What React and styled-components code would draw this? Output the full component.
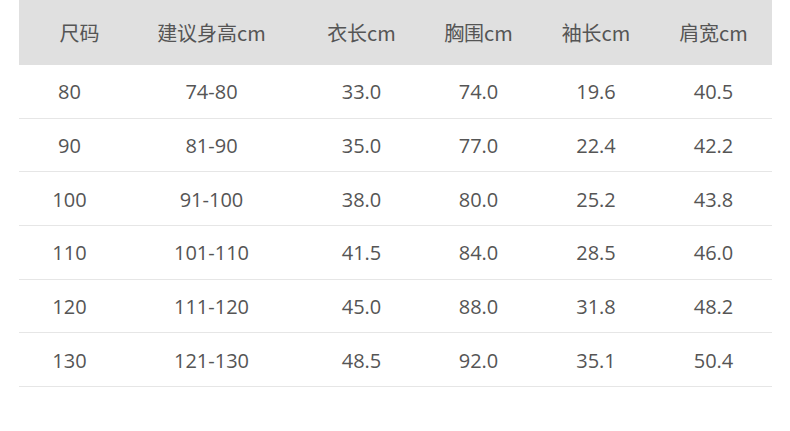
import React from "react";
import styled, { createGlobalStyle } from "styled-components";

const Global = createGlobalStyle`
  html, body { margin: 0; padding: 0; background: #fff; }
  body { font-family: "Open Sans", "Noto Sans CJK SC", sans-serif; }
`;

const Page = styled.div`
  width: 790px;
  height: 431px;
  padding: 0 18px 0 19px;
  box-sizing: border-box;
`;

const Table = styled.div`
  display: grid;
  grid-template-columns: 101px 183px 117px 117px 118px 117px;
  width: 753px;
  color: #555;
  font-size: 20px;
`;

const HeadCell = styled.div`
  height: 65px;
  background: #e0e0e0;
  display: flex;
  align-items: center;
  justify-content: center;
  padding-left: ${(p) => (p.$first ? "20px" : "0")};
  padding-bottom: 1px;
  box-sizing: border-box;
  font-family: "Noto Sans CJK SC", "Open Sans", sans-serif;
  font-size: 20px;
  color: #555;
`;

const Cell = styled.div`
  height: 53.67px;
  box-sizing: border-box;
  border-bottom: 1px solid #e6e6e6;
  display: flex;
  align-items: center;
  justify-content: center;
  padding-top: 1px;
`;

const heads = ["尺码", "建议身高cm", "衣长cm", "胸围cm", "袖长cm", "肩宽cm"];
const rows = [
  ["80", "74-80", "33.0", "74.0", "19.6", "40.5"],
  ["90", "81-90", "35.0", "77.0", "22.4", "42.2"],
  ["100", "91-100", "38.0", "80.0", "25.2", "43.8"],
  ["110", "101-110", "41.5", "84.0", "28.5", "46.0"],
  ["120", "111-120", "45.0", "88.0", "31.8", "48.2"],
  ["130", "121-130", "48.5", "92.0", "35.1", "50.4"],
];

export default function App() {
  return (
    <Page>
      <Global />
      <Table>
        {heads.map((h, i) => (
          <HeadCell key={h} $first={i === 0}>
            {h}
          </HeadCell>
        ))}
        {rows.map((r, ri) =>
          r.map((c, ci) => <Cell key={ri + "-" + ci}>{c}</Cell>)
        )}
      </Table>
    </Page>
  );
}
